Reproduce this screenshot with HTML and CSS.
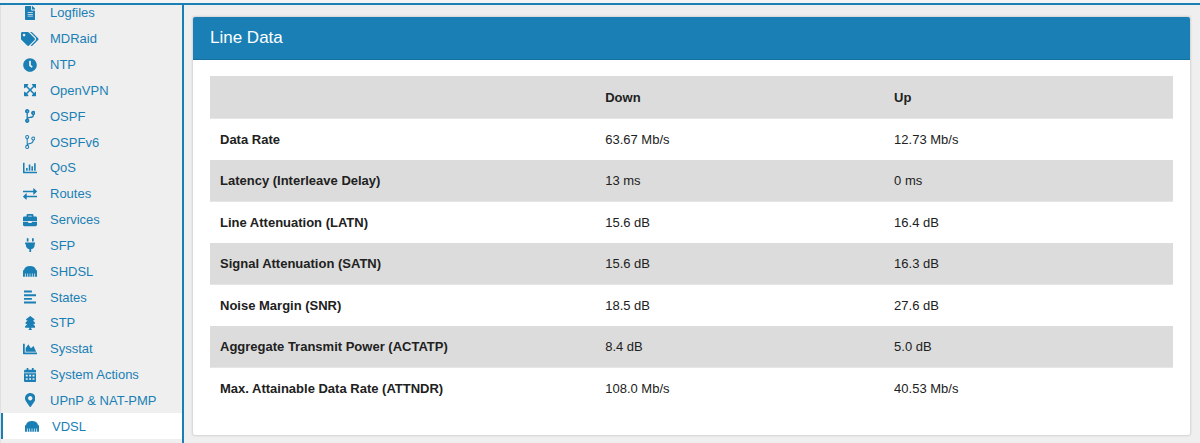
FILE: index.html
```html
<!DOCTYPE html>
<html lang="en">

<head>
    <meta charset="UTF-8">
    <meta name="viewport" content="width=device-width, initial-scale=1.0">
    <title>VDSL</title>
    <link rel="stylesheet" href="styles.css">
</head>

<body>
    <header class="topbar"></header>
    <div class="layout">
        <nav class="sidebar">
            <ul class="menu">
                <li><a href="#logfiles"><span class="icon"><svg viewBox="0 0 384 512"><path d="M224 136V0H24C10.700 0 0 10.700 0 24v464c0 13.300 10.700 24 24 24h336c13.300 0 24-10.700 24-24V160H248c-13.200 0-24-10.800-24-24zm64 236c0 6-5 12-12 12H108c-6 0-12-5-12-12v-8c0-6 5-12 12-12h168c6 0 12 5 12 12v8zm0-64c0 6-5 12-12 12H108c-6 0-12-5-12-12v-8c0-6 5-12 12-12h168c6 0 12 5 12 12v8zm0-72v8c0 6-5 12-12 12H108c-6 0-12-5-12-12v-8c0-6 5-12 12-12h168c6 0 12 5 12 12zm96-114v6H256V0h6c6 0 12 2 17 7l98 98c4 4 7 10 7 17z"/></svg></span>Logfiles</a></li>
                <li><a href="#mdraid"><span class="icon"><svg viewBox="0 0 640 512"><path d="M498 226L286 14A48 48 0 0 0 252 0H48C21.500 0 0 21.500 0 48v204a48 48 0 0 0 14 34l212 212c18.700 18.700 49 18.700 68 0l204-204c18.700-18.700 18.700-49 0-68zM112 160c-26.500 0-48-21.500-48-48s21.500-48 48-48 48 21.500 48 48-21.500 48-48 48zm514 134L422 498c-18.700 18.700-49 18.700-68 0L528 324c17-17 26-40 26-64s-9-47-26-64L331 0h49a48 48 0 0 1 34 14l212 212c18.700 18.700 18.700 49 0 68z"/></svg></span>MDRaid</a></li>
                <li><a href="#ntp"><span class="icon"><svg viewBox="0 0 512 512"><path d="M256,8C119,8,8,119,8,256S119,504,256,504,504,393,504,256,393,8,256,8Zm92,313l-20,25a16,16,0,0,1-22,2l-67-50a40,40,0,0,1-15-31V112a16,16,0,0,1,16-16h32a16,16,0,0,1,16,16V256l58,42A16,16,0,0,1,348,321Z"/></svg></span>NTP</a></li>
                <li><a href="#openvpn"><span class="icon"><svg viewBox="0 0 448 512"><path d="M448 344v112a24 24 0 0 1-24 24H312c-21 0-32-26-17-41l36-36L224 296 117 403l36 36c15 15 4 41-17 41H24a24 24 0 0 1-24-24V344c0-21 26-32 41-17l36 36L184 256 77 149l-36 36c-15 15-41 4-41-17V56a24 24 0 0 1 24-24h112c21 0 32 26 17 41l-36 36L224 216l107-107-36-36c-15-15-4-41 17-41h112a24 24 0 0 1 24 24v112c0 21-26 32-41 17l-36-36L264 256l107 107 36-36c15-15 41-4 41 17z"/></svg></span>OpenVPN</a></li>
                <li><a href="#ospf"><span class="icon"><svg viewBox="0 0 384 512"><path d="M384 144c0-44-36-80-80-80s-80 36-80 80c0 36 24 67 57 77 0 16-4 28-11 37-15 19-49 22-85 25-28 3-57 5-81 17v-144c32-10 56-40 56-76 0-44-36-80-80-80S0 36 0 80c0 36 23 66 56 76v200C23 366 0 396 0 432c0 44 36 80 80 80s80-36 80-80c0-34-21-63-51-75 3-5 8-10 15-13 16-8 40-10 66-13 42-4 90-8 118-43 14-17 21-40 22-68 31-11 54-41 54-76z"/><g fill="#efefef"><circle cx="80" cy="80" r="16"/><circle cx="304" cy="144" r="16"/><circle cx="80" cy="432" r="16"/></g></svg></span>OSPF</a></li>
                <li><a href="#ospfv6"><span class="icon"><svg viewBox="0 0 384 512"><g fill="none" stroke="currentColor" stroke-width="38"><circle cx="80" cy="76" r="56"/><circle cx="304" cy="128" r="56"/><circle cx="80" cy="436" r="56"/><path d="M80 132v248c0-60 50-66 110-72s112-24 114-124"/></g></svg></span>OSPFv6</a></li>
                <li><a href="#qos"><span class="icon"><svg viewBox="0 0 512 512"><path d="M0 64h56v328h456v56H0zM112 256h58v96h-58zM210 128h58v224h-58zM308 192h58v160h-58zM406 80h58v272h-58z"/></svg></span>QoS</a></li>
                <li><a href="#routes"><span class="icon"><svg viewBox="0 0 512 512"><path d="M0 134h376V64c0-16 14-20 26-10l102 96c10 10 10 18 0 28l-102 96c-12 10-26 6-26-10v-70H0zM512 318H136v-70c0-16-14-20-26-10L8 334c-10 10-10 18 0 28l102 96c12 10 26 6 26-10v-70h376z"/></svg></span>Routes</a></li>
                <li><a href="#services"><span class="icon"><svg viewBox="0 0 512 512"><path d="M128 128V80c0-26 22-48 48-48h160c26 0 48 22 48 48v48h80c26 0 48 22 48 48v112H0V176c0-26 22-48 48-48zM192 128h128V96H192zM0 320h192v32c0 9 7 16 16 16h96c9 0 16-7 16-16v-32h192v112c0 26-22 48-48 48H48c-26 0-48-22-48-48z"/></svg></span>Services</a></li>
                <li><a href="#sfp"><span class="icon"><svg viewBox="0 0 384 512"><path d="M320 32a32 32 0 0 0-64 0v96h64zM368 160H16a16 16 0 0 0-16 16v32a16 16 0 0 0 16 16h16v32a160 160 0 0 0 128 157v99h64v-99a160 160 0 0 0 128-157v-32h16a16 16 0 0 0 16-16v-32a16 16 0 0 0-16-16zM128 32a32 32 0 0 0-64 0v96h64z"/></svg></span>SFP</a></li>
                <li><a href="#shdsl"><span class="icon"><svg viewBox="0 0 512 512"><path d="M0 464V256c0-28 14-44 40-48 14-84 96-136 216-136s202 52 216 136c26 4 40 20 40 48v208h-70V350h-28v114h-62V350h-26v114h-58V350h-24v114h-58V350h-26v114H98V350H70v114z"/></svg></span>SHDSL</a></li>
                <li><a href="#states"><span class="icon"><svg viewBox="0 0 448 512"><path d="M0 20h288v70H0zM0 154h448v70H0zM0 288h288v70H0zM0 422h448v70H0z"/></svg></span>States</a></li>
                <li><a href="#stp"><span class="icon"><svg viewBox="0 0 384 512"><path d="M378 378L298 288h39c12 0 24-7 29-18 5-11 3-24-5-33L285 160h29c12 0 23-7 28-18 5-11 3-23-5-32L203 5c-6-7-16-7-22 0L47 110c-8 9-10 21-5 32 5 11 16 18 28 18h29l-76 77c-8 9-10 22-5 33 5 11 17 18 29 18h39L6 378c-8 9-9 21-4 32 5 11 16 22 28 22h130v24l-28 40c-4 8 0 16 8 16h104c8 0 12-8 8-16l-28-40v-24h130c12 0 23-11 28-22 5-11 4-23-4-32z"/></svg></span>STP</a></li>
                <li><a href="#sysstat"><span class="icon"><svg viewBox="0 0 512 512"><path d="M500 384H64V76c0-7-5-12-12-12H12C5 64 0 69 0 76v356c0 9 7 16 16 16h484c7 0 12-5 12-12v-40c0-7-5-12-12-12zM373 152l-86 72-84-124c-5-7-16-7-20 0L96 224v128h384l-91-194c-3-7-10-9-16-6z"/></svg></span>Sysstat</a></li>
                <li><a href="#actions"><span class="icon"><svg viewBox="0 0 448 512"><path fill-rule="evenodd" d="M0 160v-48c0-26 22-48 48-48h48V12c0-7 5-12 12-12h40c7 0 12 5 12 12v52h128V12c0-7 5-12 12-12h40c7 0 12 5 12 12v52h48c26 0 48 22 48 48v48zM0 192h448v272c0 26-22 48-48 48H48c-26 0-48-22-48-48zM64 250v60h72v-60zM188 250v60h72v-60zM312 250v60h72v-60zM64 374v60h72v-60zM188 374v60h72v-60zM312 374v60h72v-60z"/></svg></span>System Actions</a></li>
                <li><a href="#upnp"><span class="icon"><svg viewBox="0 0 384 512"><path d="M172 502C27 291 0 270 0 192 0 86 86 0 192 0s192 86 192 192c0 78-27 99-172 310-10 13-30 13-40 0zM192 272c44 0 80-36 80-80s-36-80-80-80-80 36-80 80 36 80 80 80z"/></svg></span>UPnP &amp; NAT-PMP</a></li>
                <li class="active"><a href="#vdsl"><span class="icon"><svg viewBox="0 0 512 512"><path d="M0 464V256c0-28 14-44 40-48 14-84 96-136 216-136s202 52 216 136c26 4 40 20 40 48v208h-70V350h-28v114h-62V350h-26v114h-58V350h-24v114h-58V350h-26v114H98V350H70v114z"/></svg></span>VDSL</a></li>
            </ul>
        </nav>

        <main class="content">
            <section class="card">
                <h2 class="card-title">Line Data</h2>
                <div class="card-body">
                    <table class="stats">
                        <thead>
                            <tr><th class="name"></th><th scope="col">Down</th><th scope="col">Up</th></tr>
                        </thead>
                        <tbody>
                            <tr><th scope="row">Data Rate</th><td>63.67 Mb/s</td><td>12.73 Mb/s</td></tr>
                            <tr class="odd"><th scope="row">Latency (Interleave Delay)</th><td>13 ms</td><td>0 ms</td></tr>
                            <tr><th scope="row">Line Attenuation (LATN)</th><td>15.6 dB</td><td>16.4 dB</td></tr>
                            <tr class="odd"><th scope="row">Signal Attenuation (SATN)</th><td>15.6 dB</td><td>16.3 dB</td></tr>
                            <tr><th scope="row">Noise Margin (SNR)</th><td>18.5 dB</td><td>27.6 dB</td></tr>
                            <tr class="odd"><th scope="row">Aggregate Transmit Power (ACTATP)</th><td>8.4 dB</td><td>5.0 dB</td></tr>
                            <tr><th scope="row">Max. Attainable Data Rate (ATTNDR)</th><td>108.0 Mb/s</td><td>40.53 Mb/s</td></tr>
                        </tbody>
                    </table>
                </div>
            </section>
        </main>
    </div>
</body>

</html>
```
FILE: styles.css
```css
* {
    box-sizing: border-box;
}

body {
    margin: 0;
    background-color: #efefef;
    color: #212121;
    font-family: "Liberation Sans", Arial, sans-serif;
    font-size: 13px;
    line-height: 17px;
}

/* Stays over the menu while the page scrolls */
.topbar {
    position: fixed;
    top: 0;
    left: 0;
    right: 0;
    height: 5px;
    background-color: #f4f4f4;
    border-bottom: 2px solid #1a7fb5;
}

.layout {
    display: flex;
    min-height: 100vh;
}

.sidebar {
    display: flex;
    flex: none;
    width: 184px;
    padding-bottom: 4px;
    border-left: 1px solid #e0e0e0;
    border-right: 2px solid #1a7fb5;
}

.menu {
    display: flex;
    flex: 1;
    flex-direction: column;
    margin: 0;
    padding: 0;
    list-style: none;
}

.menu li {
    display: flex;
    flex: 1;
}

.menu a {
    display: flex;
    flex: 1;
    align-items: center;
    gap: 10px;
    padding-left: 19px;
    color: #1a7fb5;
    text-decoration: none;
}

.menu .active {
    background-color: #fff;
    border-left: 2px solid #1a7fb5;
}

.icon {
    display: flex;
    justify-content: center;
    width: 20px;
}

.icon svg {
    height: 14px;
    fill: currentColor;
}

.content {
    flex: 1;
    padding: 17px 10px 7px 9px;
}

.card {
    background-color: #fff;
    border-radius: 2px;
    box-shadow: 0 0 2px 1px rgba(0, 0, 0, 0.12);
}

.card-title {
    margin: 0;
    padding: 10px 17px;
    background-color: #1a7fb5;
    border-bottom: 1px solid #14709f;
    border-radius: 2px 2px 0 0;
    color: #fff;
    font-size: 17px;
    font-weight: normal;
    line-height: 22px;
}

.card-body {
    padding: 16px 17px 26px;
}

.stats {
    width: 100%;
    border-spacing: 0;
    table-layout: fixed;
}

.stats th, .stats td {
    padding: 12px 10px;
    text-align: left;
}

.stats .name {
    width: 40%;
}

.stats thead th, .stats .odd th, .stats .odd td {
    background-color: #dcdcdc;
    border-bottom: 1px solid #e6e6e6;
}

.stats thead th {
    padding-top: 13px;
}
```
